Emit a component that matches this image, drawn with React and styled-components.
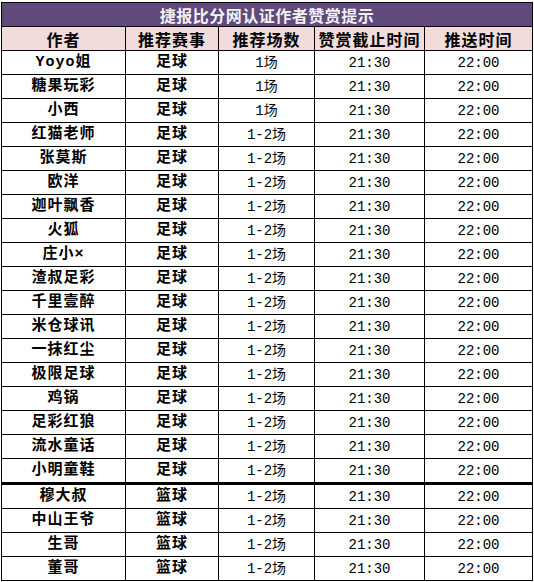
import React from "react";
import styled, { createGlobalStyle } from "styled-components";

const GlobalStyle = createGlobalStyle`
  html, body {
    margin: 0;
    padding: 0;
    background: #ffffff;
  }
`;

const football = [
  "Yoyo姐",
  "糖果玩彩",
  "小西",
  "红猫老师",
  "张莫斯",
  "欧洋",
  "迦叶飘香",
  "火狐",
  "庄小×",
  "渣叔足彩",
  "千里壹醉",
  "米仓球讯",
  "一抹红尘",
  "极限足球",
  "鸡锅",
  "足彩红狼",
  "流水童话",
  "小明童鞋",
];

const basketball = ["穆大叔", "中山王爷", "生哥", "董哥"];

const rows = [
  ...football.map((name, i) => ({
    name,
    sport: "足球",
    count: i < 3 ? "1场" : "1-2场",
  })),
  ...basketball.map((name, i) => ({
    name,
    sport: "篮球",
    count: "1-2场",
    split: i === 0,
  })),
];

const App = () => {
  return (
    <Page>
      <GlobalStyle />
      <Sheet>
        <Table>
          <colgroup>
            <col style={{ width: 124 }} />
            <col style={{ width: 93 }} />
            <col style={{ width: 96 }} />
            <col style={{ width: 110 }} />
            <col style={{ width: 108 }} />
          </colgroup>
          <thead>
            <tr>
              <Title colSpan={5}>捷报比分网认证作者赞赏提示</Title>
            </tr>
            <tr>
              <Head>作者</Head>
              <Head>推荐赛事</Head>
              <Head>推荐场数</Head>
              <Head>赞赏截止时间</Head>
              <Head>推送时间</Head>
            </tr>
          </thead>
          <tbody>
            {rows.map((r) => (
              <Row key={r.name} $split={r.split}>
                <Cell $bold>{r.name}</Cell>
                <Cell $bold>{r.sport}</Cell>
                <Cell $mono>{r.count}</Cell>
                <Cell $mono>21:30</Cell>
                <Cell $mono>22:00</Cell>
              </Row>
            ))}
          </tbody>
        </Table>
      </Sheet>
    </Page>
  );
};

export default App;

const Page = styled.div`
  width: 534px;
  height: 582px;
  overflow: hidden;
  background: #ffffff;
`;

const Sheet = styled.div`
  padding: 2px 0 0 1px;
`;

const Table = styled.table`
  border-collapse: collapse;
  table-layout: fixed;
  width: 531px;
  font-family: "Noto Sans CJK SC", sans-serif;
  color: #000000;
`;

const Title = styled.th`
  height: 23px;
  padding: 0;
  background: #604a7b;
  color: #f2f2f2;
  font-size: 16px;
  font-weight: 700;
  letter-spacing: 0.5px;
  text-align: center;
  border: 1px solid #000000;
  line-height: 22px;
`;

const Head = styled.th`
  height: 22px;
  padding: 1px 0 0;
  background: #f2dcdb;
  font-size: 16px;
  font-weight: 700;
  letter-spacing: 1px;
  text-align: center;
  border: 1px solid #000000;
  line-height: 22px;
`;

const Row = styled.tr`
  td {
    border-top: ${(p) => (p.$split ? "3px solid #000000" : "1px solid #000000")};
  }
`;

const Cell = styled.td`
  height: 22px;
  padding: 1px 0 0;
  text-align: center;
  border: 1px solid #000000;
  font-size: ${(p) => (p.$mono ? "14px" : "15px")};
  font-weight: ${(p) => (p.$bold ? 700 : 400)};
  font-family: ${(p) =>
    p.$mono
      ? '"Liberation Mono", "Noto Sans CJK SC", monospace'
      : '"Liberation Mono", "Noto Sans CJK SC", sans-serif'};
  letter-spacing: ${(p) => (p.$bold ? "1px" : "0")};
  line-height: 22px;
  white-space: nowrap;
`;
